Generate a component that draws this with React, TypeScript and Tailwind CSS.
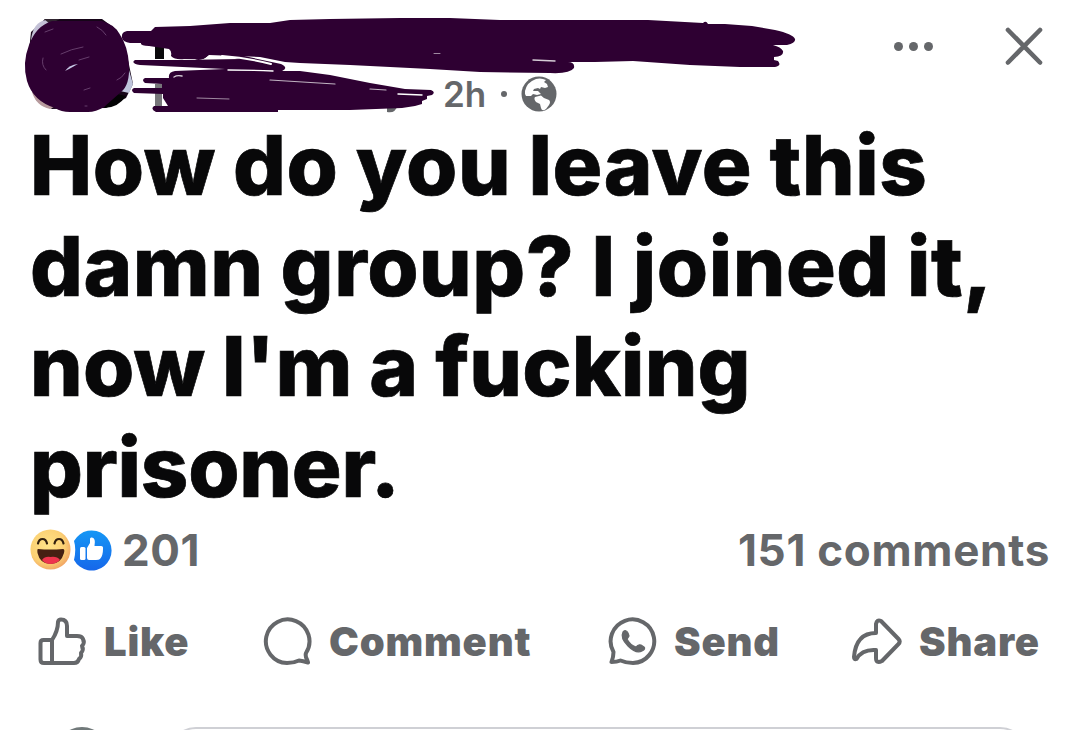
import type { ReactNode } from "react";

const headline = [
  { text: "How do you leave this", className: "tracking-[0.55px]" },
  { text: "damn group? I joined it,", className: "tracking-[0.5px]" },
  { text: "now I'm a fucking", className: "tracking-[0.15px]" },
  { text: "prisoner.", className: "tracking-[-0.25px]" },
];

export default function App() {
  return (
    <main className="relative flex h-[730px] w-[1080px] flex-col overflow-hidden bg-white font-['Inter','Liberation_Sans',sans-serif] text-[#65676a]">
      <PostHeader />
      <h1 className="h-[404px] pl-[30px] text-[83px] leading-[100.7px] font-extrabold text-[#080809] [word-spacing:-1.5px] [-webkit-text-stroke:0.7px_#080809]">
        {headline.map((line) => (
          <span key={line.text} className={`block whitespace-nowrap ${line.className}`}>
            {line.text}
          </span>
        ))}
      </h1>
      <Reactions />
      <div className="flex h-[142px] items-start pt-[29px] text-[40px] leading-[46px] font-black">
        <Action label="Like" className="ml-[36px] w-[225px] gap-[16px]">
          <LikeIcon />
        </Action>
        <Action label="Comment" className="w-[347px] gap-[16px]">
          <CommentIcon />
        </Action>
        <Action label="Send" className="w-[243px] gap-[14px]">
          <SendIcon />
        </Action>
        <Action label="Share" className="gap-[16px]">
          <ShareIcon />
        </Action>
      </div>
      <Composer />
    </main>
  );
}

function PostHeader() {
  return (
    <header className="relative flex h-[115px] shrink-0">
      <Scribble />
      <div className="flex h-[42px] items-center self-end pl-[443px] text-[35px] font-semibold">
        <span className="w-[43px] whitespace-nowrap">2h</span>
        <span className="ml-[15px] h-[6px] w-[6px] rounded-full bg-[#65676a]" />
        <Globe />
      </div>
      <button aria-label="More" className="mt-[42px] ml-auto flex h-[9px] gap-[6px]">
        <span className="h-[9px] w-[9px] rounded-full bg-[#65676a]" />
        <span className="h-[9px] w-[9px] rounded-full bg-[#65676a]" />
        <span className="h-[9px] w-[9px] rounded-full bg-[#65676a]" />
      </button>
      <button aria-label="Close" className="mt-[26px] mr-[36px] ml-[71px] h-[40px]">
        <svg width="40" height="40" fill="none" stroke="#65676a" strokeWidth="4.6" strokeLinecap="round">
          <path d="M4 4l32 32.500M36 4L4 36.500" />
        </svg>
      </button>
    </header>
  );
}

// marker strokes that hide the avatar, the name and the group line
function Scribble() {
  return (
    <svg className="absolute top-0 left-0" width="820" height="115" fill="none">
      <path d="M45 19H102L117 30L128 60L133 84L126 98L106 108L52 109L36 100L28 60L31 32Z" fill="#160518" />
      <path d="M31 40Q33 22 46 20L58 22L36 42Z" fill="#c3c1d6" />
      <path d="M44 19H60L50 24Z" fill="#302530" />
      <path d="M129 70L133 84L129 93L120 91Z" fill="#bfc4dc" />
      <path d="M112 93L126 96Q118 108 104 108Z" fill="#030204" />
      <path d="M32 92Q36 106 50 109L56 106L40 92Z" fill="#b79a9d" />
      <path d="M155 44h9v15h-9zM194 55q8 8 14 0z" fill="#0a090b" />
      <path d="M155 84h7v24h-7z" fill="#77767a" />
      <path d="M400 88L398 105Q395 114 387 112V108Q392 108 394 104Z" fill="#65676a" />
      <g fill="#2e0032">
        <path d="M52 21H102Q113 24 119 33Q128 46 129 65Q130 85 121 92L104 107Q96 112 88 112H70Q61 112 55 108Q33 101 27 81Q22 63 29 45Q36 26 52 21Z" />
        <path d="M127 31Q121 32 122 38Q123 42 130 43L141 43Q140 46 149 46L169 49Q172 51 171 56Q175 60 184 59H195Q201 62 209 55L260 57L285 62L300 63L350 65L430 69L480 72L550 73Q570 74 574 68Q575 62 568 62L595 62L633 61L690 65L740 67H775Q782 66 778 61L774 60V57Q784 56 783 51Q781 47 773 45H787Q796 43 795 39Q793 34 775 30L752 26L725 24L708 24Q706 20 703 23L648 20L560 20L500 20L450 18H400L330 19L290 20L270 23L230 23L190 26L155 27L151 31Z" />
        <path d="M135 60L180 60L240 59L215 54L230 53L281 64Q289 68 282 71L300 71L330 75L370 83L405 89L431 90Q436 92 432 95L427 96V99L422 101V104L415 106L402 108L350 110L278 110V112L156 112Q150 109 154 106L168 106L163 98V94L134 93Q130 90 134 88L162 88V84L145 83Q141 80 145 78L169 78Q168 72 175 71L225 69L140 65Q130 63 135 60Z" />
      </g>
      <g stroke="#fff" strokeWidth="1.4" strokeLinecap="round">
        <path d="M222 56q26 2 49 8" strokeWidth="2" />
        <path d="M228 70q20 0 45 1" />
        <path d="M174 77q3-2 8-1" opacity=".8" />
        <path d="M270 80l65 4M370 89l16 1" strokeWidth="1.2" opacity=".7" />
        <path d="M398 94l24 1" />
        <path d="M533 60l22 1" opacity=".8" />
        <path d="M434 53.500h6M197 98l32 1" strokeWidth=".9" opacity=".6" />
      </g>
      <path d="M65 71q4-6 13-7l-9 5z" fill="#c9cae8" />
      <g stroke="#95739d" strokeWidth=".9" strokeLinecap="round" opacity=".6">
        <path d="M61 54q10-5 22-7M79 60l10-3M45 32l8-3M97 27q6 3 9 8" />
        <path d="M117 80q5-2 8-7M84 90l6-2M43 58q-2 7 3 12M85 106h2" />
      </g>
    </svg>
  );
}

function Globe() {
  return (
    <svg className="ml-[14px]" width="36" height="36" viewBox="0 0 36 36">
      <circle cx="18" cy="18" r="17.500" fill="#65676a" />
      <path d="M4 15Q6 6 15 3Q20 1.500 25 4L23 6L26 8L27 11L24 12L20 11L19 13L17 12L13 13L12 15L17 15L20 18L16 19L12 18L10 20L5 20Q3.500 18 4 15Z" fill="#fff" />
      <path d="M14 21L20 19.500L23 22L28 24Q30 26 28 29L25 33Q21 36 20 32L19 28L15 26Q12.500 23 14 21Z" fill="#fff" />
    </svg>
  );
}

function Reactions() {
  return (
    <div className="flex h-[69px] shrink-0 items-center pr-[30px] pl-[30px] pb-[7px] text-[44px] leading-[52px] font-bold">
      <HahaBadge />
      <LikeBadge />
      <span className="ml-[9px] tracking-[0.5px]">201</span>
      <span className="ml-auto tracking-[0.7px]">151 comments</span>
    </div>
  );
}

function HahaBadge() {
  return (
    <svg width="42" height="42" viewBox="0 0 42 42" fill="none">
      <defs>
        <radialGradient id="haha" cx=".42" cy=".4" r=".62">
          <stop stopColor="#ffe388" />
          <stop offset=".7" stopColor="#fbd073" />
          <stop offset="1" stopColor="#f2a765" />
        </radialGradient>
      </defs>
      <circle cx="20.500" cy="20.500" r="20" fill="url(#haha)" />
      <path d="M8 14.500Q9 10 12.500 10Q16 10 17 14.500M24.500 14.500Q25.500 10 29 10Q32.500 10 33.500 14.500" stroke="#32200f" strokeWidth="2.200" strokeLinecap="round" />
      <path d="M8 20Q20 21 33 20Q35 20 34 24Q31 35 20.500 35Q10 35 7.500 24Q7 20 8 20Z" fill="#452013" />
      <path d="M12 31Q15 27 20.500 28Q27 27 30 31Q26 35 20.500 35Q15 35 12 31Z" fill="#ee344d" />
    </svg>
  );
}

function LikeBadge() {
  return (
    <svg width="41" height="42" viewBox="0 0 41 42">
      <defs>
        <linearGradient id="like" x1="0" y1="0" x2="0" y2="1">
          <stop stopColor="#1597f5" />
          <stop offset="1" stopColor="#1667ea" />
        </linearGradient>
      </defs>
      <path d="M2 12A20 20 0 1 1 2 31Q4.500 20 2 12Z" fill="url(#like)" />
      <rect x="8" y="18" width="5.500" height="13" rx="1.500" fill="#fff" />
      <path d="M15 19L18 14V10Q18 8 20 8.500Q24 9 22.500 17H29Q31.500 17 31 20Q31 27 28 30Q27 31 24 31H17Q15 31 15 29Z" fill="#fff" />
    </svg>
  );
}

function Action({ label, className, children }: { label: string; className: string; children: ReactNode }) {
  return (
    <button className={`flex items-center ${className}`}>
      {children}
      <span className="-mt-[3px] tracking-[0.8px] whitespace-nowrap">{label}</span>
    </button>
  );
}

const stroke = {
  width: 52,
  height: 52,
  viewBox: "0 0 52 52",
  fill: "none",
  stroke: "#65676a",
  strokeWidth: 4,
  strokeLinecap: "round",
  strokeLinejoin: "round",
} as const;

function LikeIcon() {
  return (
    <svg {...stroke}>
      <path d="M16 23H7.500Q4.500 23 4.500 26V42.500Q4.500 46 8 46H38Q42 46 43 42Q46 40 45 36Q48 33 46 29Q49 26 47 22Q46 19 41 19H31V9Q31 2.500 25 2.500Q22.500 2.500 22 5Q22 14 16 23V46" />
    </svg>
  );
}

function CommentIcon() {
  return (
    <svg {...stroke}>
      <path d="M38 43.500Q33 46 26 46A21.800 21.800 0 1 1 45 36Q44 39 46 42.500L47 45.500Q42 44 38 43.500Z" />
    </svg>
  );
}

function SendIcon() {
  return (
    <svg {...stroke}>
      <path d="M12.500 43.500Q18 46 25 46A21.800 21.800 0 1 0 5.500 35Q5.500 40 3.500 45Q9 45 12.500 43.500Z" />
      <path d="M15 15Q18 12 20 16L21 19Q20 21 19 22Q22 28 28 30Q30 27 33 28L36 30Q38 32 34 34Q28 37 20 29Q12 21 15 15Z" fill="#65676a" strokeWidth="1.2" />
    </svg>
  );
}

function ShareIcon() {
  return (
    <svg {...stroke}>
      <path d="M25 16V7Q26 2 30 4L47.500 22Q50 24.500 47.500 27L31 44Q25 47 25 41V33Q11 32 5.500 42Q3 43 3 40Q5 16 25 16Z" />
    </svg>
  );
}

function Composer() {
  return (
    <div className="absolute top-[727px] left-0 flex h-[60px] w-full items-start">
      <div className="ml-[54px] h-[56px] w-[56px] rounded-full bg-[#71797a]" />
      <div className="ml-[58px] h-[56px] w-[860px] rounded-[28px] border-2 border-[#cfd0d5]" />
    </div>
  );
}
